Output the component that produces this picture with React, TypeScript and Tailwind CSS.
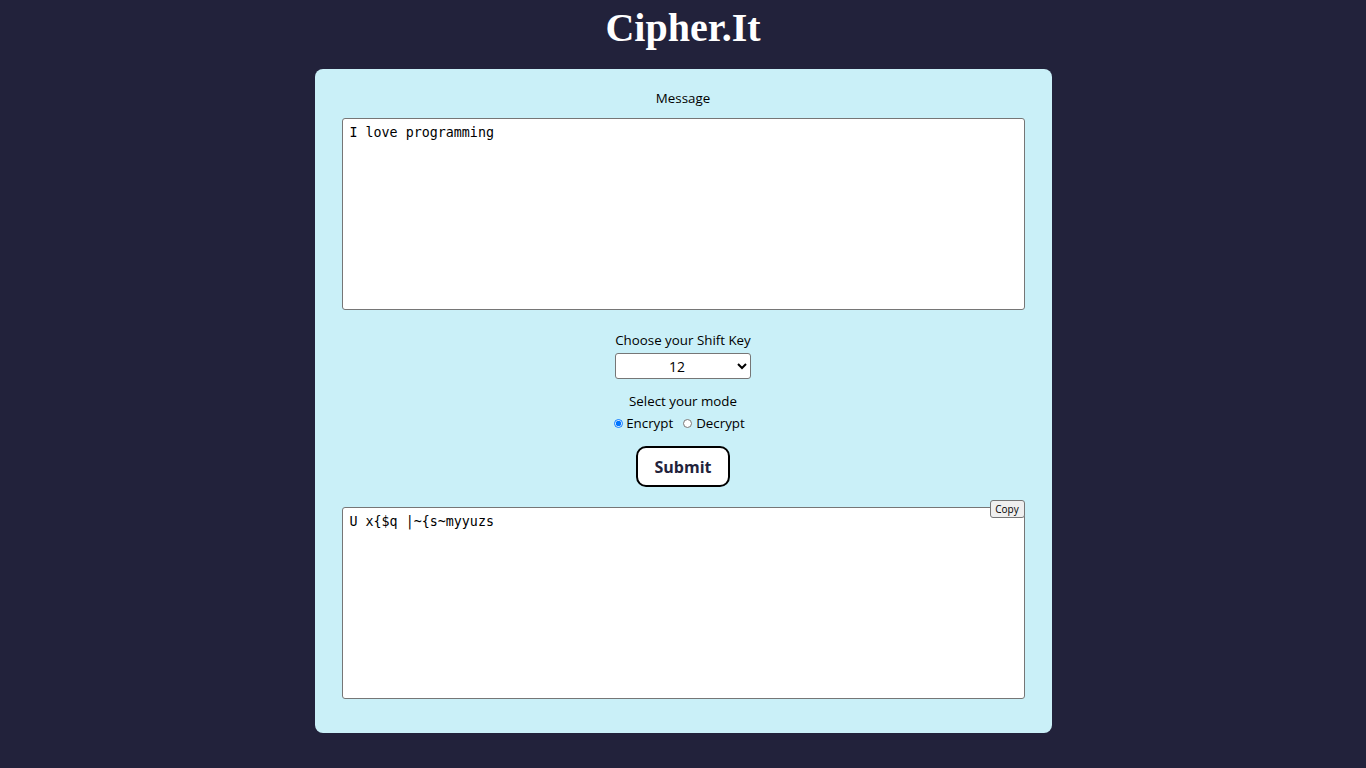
import { useState } from 'react'

function caesar(text: string, shift: number, mode: 'encrypt' | 'decrypt') {
  const s = mode === 'encrypt' ? shift : -shift
  return text
    .split('')
    .map(ch => (ch === ' ' ? ' ' : String.fromCharCode(ch.charCodeAt(0) + s)))
    .join('')
}

export default function App() {
  const [message, setMessage] = useState('I love programming')
  const [shift, setShift] = useState(12)
  const [mode, setMode] = useState<'encrypt' | 'decrypt'>('encrypt')
  const [output, setOutput] = useState('U x{$q |~{s~myyuzs')

  return (
    <div className="min-h-screen bg-[#22223b] font-['Open_Sans',sans-serif] text-[13.33px] text-[#22223b]">
      <h1 className="pt-[5px] text-center font-['Liberation_Serif',serif] text-[40px] font-bold leading-[46px] text-white">
        Cipher.It
      </h1>

      <div className="mx-auto mt-[18px] flex w-[737px] flex-col items-center rounded-lg bg-[#caf0f8] px-[27px] pb-[34px] pt-[20px]">
        <label className="leading-[19px] text-black">Message</label>
        <textarea
          value={message}
          onChange={e => setMessage(e.target.value)}
          className="mt-[10px] h-[192px] w-full resize-none rounded-[3px] border border-[#767676] bg-white px-[7px] py-[6px] font-['DejaVu_Sans_Mono',monospace] text-[13.33px] leading-[16px] text-black outline-none"
        />

        <label className="mt-[21px] leading-[19px] text-black">Choose your Shift Key</label>
        <select
          value={shift}
          onChange={e => setShift(Number(e.target.value))}
          className="mt-[3px] h-[26px] w-[136px] rounded-[3px] border border-[#767676] bg-white text-center text-[14px] text-black [text-align-last:center]"
        >
          {Array.from({ length: 25 }, (_, i) => i + 1).map(n => (
            <option key={n} value={n}>{n}</option>
          ))}
        </select>

        <label className="mt-[13px] leading-[19px] text-black">Select your mode</label>
        <div className="mt-[3px] flex items-center pr-[7px] leading-[19px] text-black">
          <input
            type="radio"
            name="mode"
            checked={mode === 'encrypt'}
            onChange={() => setMode('encrypt')}
            className="m-0 mr-[3px] h-[9px] w-[9px]"
          />
          <span>Encrypt</span>
          <input
            type="radio"
            name="mode"
            checked={mode === 'decrypt'}
            onChange={() => setMode('decrypt')}
            className="m-0 ml-[10px] mr-[4px] h-[9px] w-[9px]"
          />
          <span>Decrypt</span>
        </div>

        <button
          onClick={() => setOutput(caesar(message, shift, mode))}
          className="mt-[13px] h-[41px] w-[94px] rounded-[10px] border-2 border-black bg-white text-[16px] font-bold text-[#22223b]"
        >
          Submit
        </button>

        <div className="relative mt-[20px] w-full">
          <textarea
            value={output}
            readOnly
            className="block h-[192px] w-full resize-none rounded-[3px] border border-[#767676] bg-white px-[7px] py-[6px] font-['DejaVu_Sans_Mono',monospace] text-[13.33px] leading-[16px] text-black outline-none"
          />
          <button
            onClick={() => navigator.clipboard?.writeText(output)}
            className="absolute right-0 top-[-7px] h-[18px] w-[35px] rounded-[3px] border border-[#767676] bg-[#efefef] text-[10px] leading-none text-black"
          >
            Copy
          </button>
        </div>
      </div>
    </div>
  )
}
